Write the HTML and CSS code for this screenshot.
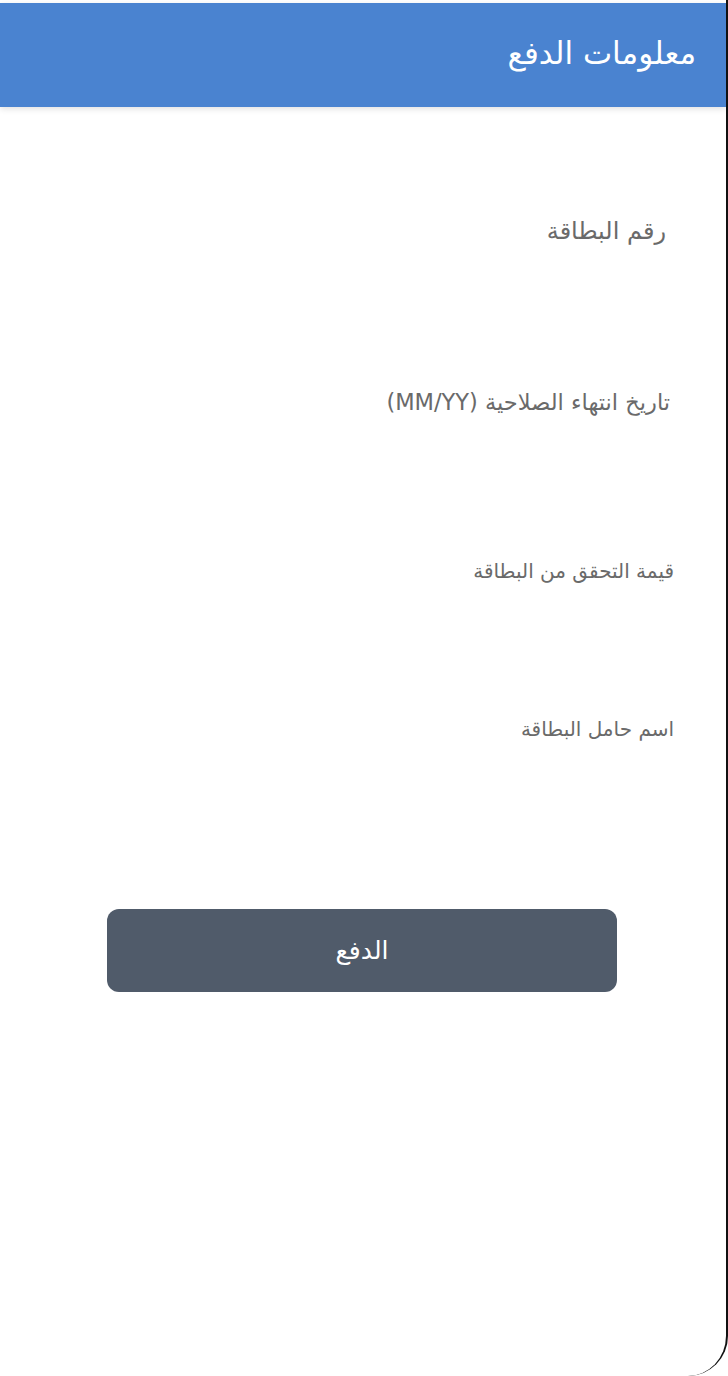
FILE: index.html
```html
<!DOCTYPE html>
<html lang="ar" dir="rtl">
<head>
<meta charset="utf-8">
<link rel="stylesheet" href="styles.css">
</head>
<body>
<div class="device">
  <header class="appbar"><h1 class="title">معلومات الدفع</h1></header>
  <main class="form">
    <div class="field field-first"><span class="label label-lg">رقم البطاقة</span></div>
    <div class="field field-exp"><span class="label label-md">تاريخ انتهاء الصلاحية (MM/YY)</span></div>
    <div class="field field-cvv"><span class="label label-sm">قيمة التحقق من البطاقة</span></div>
    <div class="field field-name"><span class="label label-sm">اسم حامل البطاقة</span></div>
    <div class="actions"><button class="pay">الدفع</button></div>
  </main>
</div>
</body>
</html>
```

FILE: styles.css
```css
html, body {
  margin: 0;
  padding: 0;
  background: #000;
}
body {
  width: 728px;
  height: 1376px;
  font-family: "DejaVu Sans", sans-serif;
  background: #fff;
}
.device {
  box-sizing: border-box;
  width: 728px;
  height: 1376px;
  padding-top: 3px;
  border-right: 2px solid #111;
  border-bottom-right-radius: 40px;
  border-bottom-left-radius: 6px;
  background: #fff;
  overflow: hidden;
}
.appbar {
  height: 104px;
  background: #4a83d0;
  box-shadow: 0 2px 6px rgba(0,0,0,0.12);
  display: flex;
  align-items: center;
  padding-right: 30px;
  padding-bottom: 4px;
  box-sizing: border-box;
}
.title {
  margin: 0;
  color: #fff;
  font-weight: 400;
  font-size: 31px;
  line-height: 40px;
}
.form {
  display: flex;
  flex-direction: column;
}
.field {
  display: flex;
  line-height: 30px;
  height: 30px;
}
.label {
  color: #6a6a6a;
  font-weight: 400;
}
.label-lg { font-size: 24px; }
.label-md { font-size: 22.5px; }
.label-sm { font-size: 20px; }
.field-first { margin-top: 109px; padding-right: 60px; }
.field-exp { margin-top: 141px; padding-right: 56px; }
.field-cvv { margin-top: 139px; padding-right: 52px; }
.field-name { margin-top: 128px; padding-right: 52px; }
.actions {
  display: flex;
  justify-content: center;
  margin-top: 165px;
  padding-right: 2px;
}
.pay {
  width: 510px;
  height: 83px;
  border: none;
  border-radius: 12px;
  background: #505b6a;
  color: #fff;
  font-family: inherit;
  font-size: 25px;
}
```
